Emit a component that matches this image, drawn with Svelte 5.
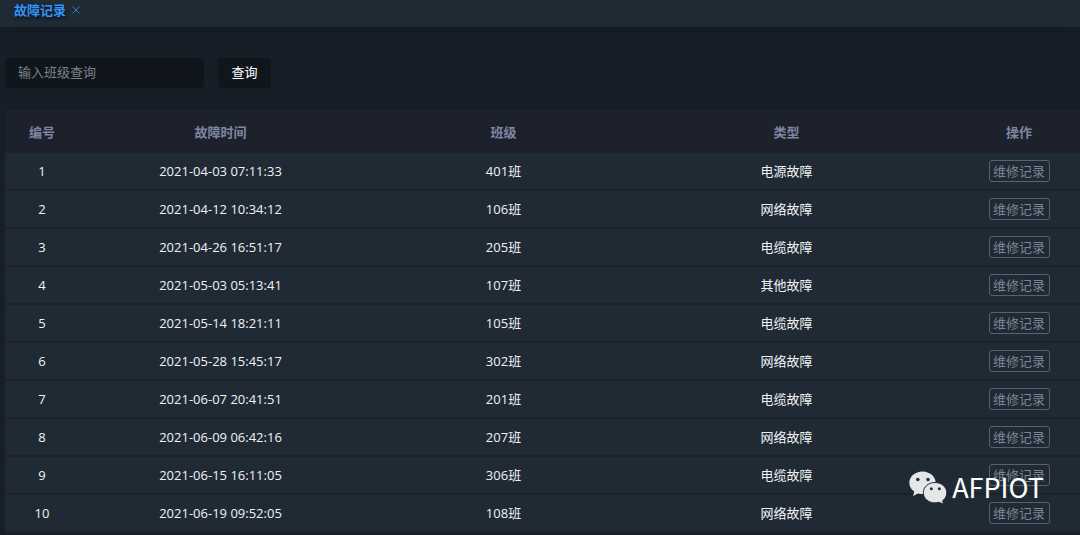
<script>
  const records = [
    { id: 1, time: '2021-04-03 07:11:33', room: '401班', type: '电源故障' },
    { id: 2, time: '2021-04-12 10:34:12', room: '106班', type: '网络故障' },
    { id: 3, time: '2021-04-26 16:51:17', room: '205班', type: '电缆故障' },
    { id: 4, time: '2021-05-03 05:13:41', room: '107班', type: '其他故障' },
    { id: 5, time: '2021-05-14 18:21:11', room: '105班', type: '电缆故障' },
    { id: 6, time: '2021-05-28 15:45:17', room: '302班', type: '网络故障' },
    { id: 7, time: '2021-06-07 20:41:51', room: '201班', type: '电缆故障' },
    { id: 8, time: '2021-06-09 06:42:16', room: '207班', type: '网络故障' },
    { id: 9, time: '2021-06-15 16:11:05', room: '306班', type: '电缆故障' },
    { id: 10, time: '2021-06-19 09:52:05', room: '108班', type: '网络故障' }
  ];
  let keyword = $state('');
</script>

<div class="page">
  <nav class="tabs">
    <a class="tab" href="#faults">故障记录</a>
    <button class="close" type="button" aria-label="关闭">
      <svg width="8" height="8" viewBox="0 0 8 8"><path d="M0.5 0.5 7.5 7.5M7.5 0.5 0.5 7.5" /></svg>
    </button>
  </nav>

  <main>
    <form class="search" onsubmit={(e) => e.preventDefault()}>
      <input type="text" placeholder="输入班级查询" aria-label="输入班级查询" bind:value={keyword} />
      <button type="submit">查询</button>
    </form>

    <table>
      <thead>
        <tr>
          <th class="num">编号</th>
          <th>故障时间</th>
          <th>班级</th>
          <th>类型</th>
          <th class="action">操作</th>
        </tr>
      </thead>
      <tbody>
        {#each records as r (r.id)}
          <tr>
            <td>{r.id}</td>
            <td>{r.time}</td>
            <td>{r.room}</td>
            <td>{r.type}</td>
            <td class="action"><button type="button">维修记录</button></td>
          </tr>
        {/each}
      </tbody>
    </table>
  </main>

  <div class="mark">
    <svg width="38" height="33" viewBox="0 0 38 33" aria-hidden="true">
      <path class="bubble" d="M13.5 0.5C6.2 0.5 0.3 5.500 0.3 11.800c0 3.600 1.900 6.700 5 8.800L4 25l5.100-2.600c1.400.4 2.900.6 4.400.6 7.300 0 13.200-5 13.200-11.200S20.800.5 13.500.5Z" />
      <path class="bubble front" d="M26 11.500c-6.500 0-11.700 4.500-11.700 10.200S19.500 31.900 26 31.900c1.400 0 2.700-.2 3.900-.6l5 2-1.300-3.600c2.600-1.900 4.200-4.800 4.200-8 0-5.700-5.300-10.200-11.800-10.200Z" />
      <g class="eyes">
        <circle cx="8.800" cy="8.500" r="1.800" /><circle cx="19" cy="8.500" r="1.800" />
        <circle cx="22.300" cy="17.700" r="1.500" /><circle cx="30.300" cy="17.700" r="1.500" />
      </g>
    </svg>
    <span>AFPIOT</span>
  </div>
</div>

<style>
  :global(body) {
    margin: 0;
    background: #171e27;
    overflow: hidden;
  }
  .page {
    position: relative;
    font: 13px/20px "Noto Sans CJK SC", "Noto Sans", sans-serif;
    color: #f0f2f4;
  }
  button,
  input {
    font: inherit;
    box-sizing: border-box;
  }
  .tabs {
    display: flex;
    align-items: center;
    gap: 6px;
    height: 20px;
    padding: 0 14px 7px;
    background: #202a35;
    box-shadow: 0 2px 16px rgba(0, 0, 0, 0.2);
  }
  .tab {
    color: #3196f5;
    font-weight: 700;
    text-decoration: none;
    text-shadow: 1px 2px 3px #0b1119;
  }
  .close {
    display: flex;
    padding: 0;
    border: 0;
    background: none;
  }
  .close path {
    stroke: #327fc4;
    fill: none;
  }
  main {
    padding: 31px 0 2px 5px;
  }
  .search {
    display: flex;
    gap: 14px;
    margin-bottom: 22px;
  }
  .search input {
    width: 199px;
    height: 30px;
    padding: 0 13px 3px;
    border: 0;
    border-radius: 4px;
    background: #11161c;
    color: #f0f2f4;
  }
  .search input::placeholder {
    color: #7b818b;
    opacity: 1;
  }
  .search button {
    width: 53px;
    height: 30px;
    padding: 0 0 2px;
    border: 0;
    border-radius: 3px;
    background: #11161c;
    color: #fff;
  }
  table {
    width: 100%;
    table-layout: fixed;
    border-collapse: separate;
    border-spacing: 0;
    text-align: center;
  }
  th,
  td {
    box-sizing: border-box;
    padding: 0;
  }
  th {
    height: 43px;
    background: #1c212c;
    color: #7f86a3;
    font-weight: 700;
  }
  td {
    height: 38px;
    background: #202a35;
    border-bottom: 2px solid #1a232d;
    font-family: "Open Sans", "Noto Sans CJK SC", sans-serif;
  }
  .num {
    width: 74px;
  }
  .action {
    width: 152px;
    padding-left: 30px;
  }
  td button {
    display: block;
    width: 61px;
    height: 22px;
    margin: 0 auto;
    padding: 0;
    border: 1px solid #59616d;
    border-radius: 3px;
    background: transparent;
    color: #7c8694;
    line-height: 20px;
  }
  .mark {
    position: absolute;
    right: 36px;
    bottom: 30px;
    display: flex;
    align-items: center;
    gap: 5px;
    color: #fff;
    font-size: 27px;
    line-height: 36px;
    text-shadow: 1px 1px 1px #30363e;
    pointer-events: none;
  }
  .bubble {
    fill: #e5e6e8;
  }
  .front {
    stroke: #202a35;
    stroke-width: 1;
  }
  .eyes {
    fill: #26303a;
  }
</style>
